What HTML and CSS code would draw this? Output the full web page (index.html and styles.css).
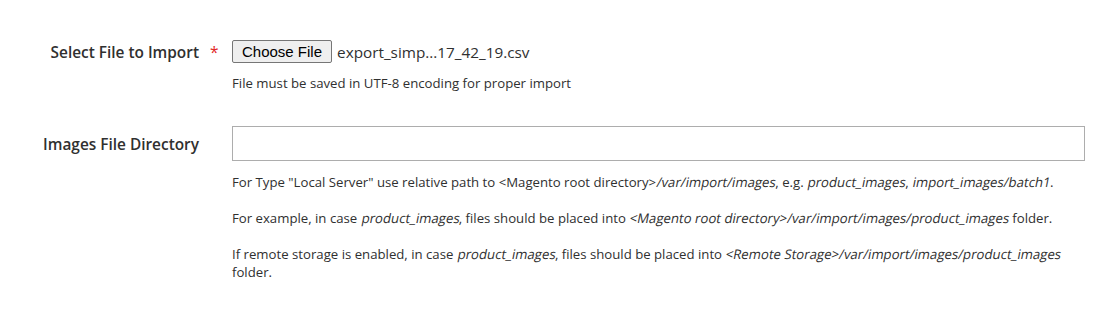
FILE: index.html
```html
<!DOCTYPE html>
<html lang="en">
<head>
<meta charset="utf-8">
<title>Import</title>
<link rel="stylesheet" href="styles.css">
</head>
<body>
<form class="form">
  <div class="field field-file">
    <label class="field-label">Select File to Import</label>
    <span class="required">*</span>
    <div class="field-control">
      <div class="file-row">
        <button type="button" class="file-btn">Choose File</button>
        <span class="file-name">export_simp...17_42_19.csv</span>
      </div>
      <div class="note">
        <p>File must be saved in UTF-8 encoding for proper import</p>
      </div>
    </div>
  </div>
  <div class="field field-dir">
    <label class="field-label">Images File Directory</label>
    <span class="required-empty"></span>
    <div class="field-control">
      <input type="text" class="text-input">
      <div class="note">
        <p>For Type "Local Server" use relative path to &lt;Magento root directory&gt;<i class="em">/var/import/images</i>, e.g. <i class="em">product_images</i>, <i class="em">import_images/batch1</i>.</p>
        <p>For example, in case <i class="em">product_images</i>, files should be placed into <i class="em">&lt;Magento root directory&gt;/var/import/images/product_images</i> folder.</p>
        <p>If remote storage is enabled, in case <i class="em">product_images</i>, files should be placed into <i class="em">&lt;Remote Storage&gt;/var/import/images/product_images</i> folder.</p>
      </div>
    </div>
  </div>
</form>
</body>
</html>
```

FILE: styles.css
```css
html, body {
  margin: 0;
  padding: 0;
  background: #ffffff;
}
body {
  font-family: "Open Sans", "Noto Sans", sans-serif;
  color: #303030;
}
.form {
  padding: 40px 20px 0 8px;
}
.field {
  display: grid;
  grid-template-columns: 191px 33px 1fr;
}
.field-dir {
  margin-top: 34px;
}
.field-label {
  text-align: right;
  font-size: 15.4px;
  font-weight: 600;
  color: #303030;
}
.field-file .field-label {
  line-height: 23px;
  padding-top: 1px;
}
.field-dir .field-label {
  line-height: 35px;
  padding-top: 1px;
}
.required {
  color: #e22626;
  font-size: 15.4px;
  line-height: 23px;
  padding-left: 11px;
  padding-top: 1px;
}
.file-row {
  display: flex;
  align-items: center;
  height: 23px;
}
.file-btn {
  box-sizing: border-box;
  height: 23px;
  padding: 0 9px;
  margin: 0;
  font-family: "Liberation Sans", Arial, sans-serif;
  font-size: 15px;
  color: #000000;
  background: #efefef;
  border: 1px solid #767676;
  border-radius: 2px;
}
.file-name {
  margin-left: 5px;
  font-size: 15.3px;
  color: #303030;
}
.note {
  margin-top: 11px;
  font-size: 13.2px;
  line-height: 18px;
  color: #303030;
}
.field-dir .note {
  margin-top: 12px;
}
.note p {
  margin: 0 0 18px 0;
}
.note p:last-child {
  margin-bottom: 0;
}
.em {
  display: inline-block;
  font-style: normal;
  transform: skewX(-11deg);
  transform-origin: 0 75%;
}
.text-input {
  display: block;
  box-sizing: border-box;
  width: 100%;
  height: 35px;
  margin: 0;
  padding: 0 10px;
  border: 1px solid #adadad;
  border-radius: 0;
  background: #ffffff;
  font-family: "Open Sans", sans-serif;
  font-size: 14px;
}
```
